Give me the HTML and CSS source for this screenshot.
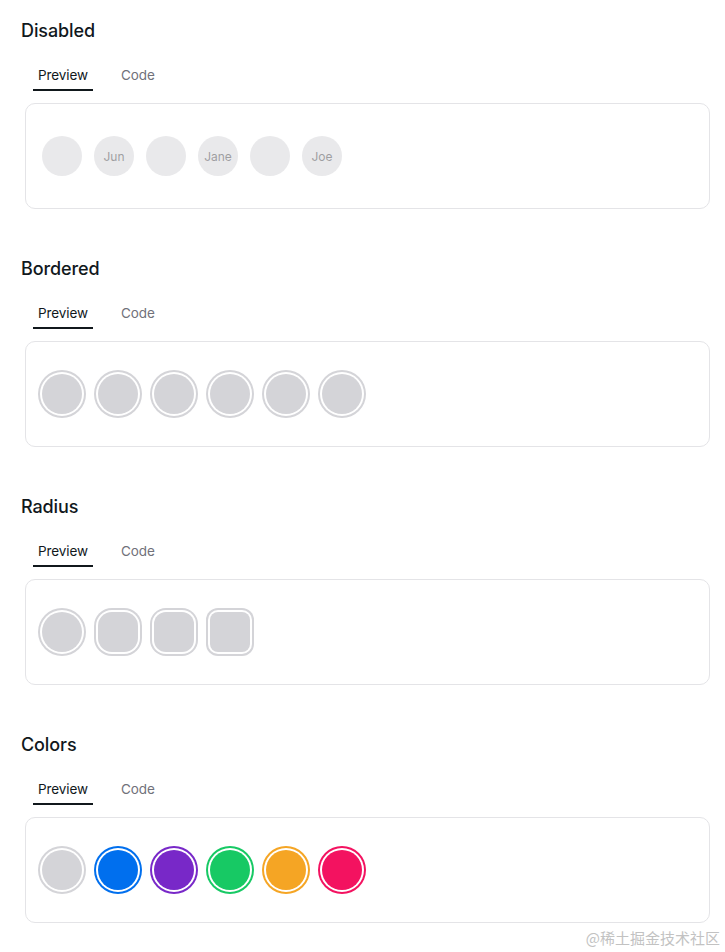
FILE: index.html
```html
<!DOCTYPE html>
<html lang="en">
<head>
<meta charset="utf-8">
<title>Avatar</title>
<link rel="stylesheet" href="styles.css">
</head>
<body>
<main class="page">
  <section class="section">
    <h2 class="title">Disabled</h2>
    <div class="tabs"><span class="tab active">Preview</span><span class="tab">Code</span></div>
    <div class="box">
      <div class="row row-disabled">
        <span class="avatar disabled"></span>
        <span class="avatar disabled">Jun</span>
        <span class="avatar disabled"></span>
        <span class="avatar disabled">Jane</span>
        <span class="avatar disabled"></span>
        <span class="avatar disabled">Joe</span>
      </div>
    </div>
  </section>

  <section class="section">
    <h2 class="title">Bordered</h2>
    <div class="tabs"><span class="tab active">Preview</span><span class="tab">Code</span></div>
    <div class="box">
      <div class="row">
        <span class="avatar ring c-default"></span>
        <span class="avatar ring c-default"></span>
        <span class="avatar ring c-default"></span>
        <span class="avatar ring c-default"></span>
        <span class="avatar ring c-default"></span>
        <span class="avatar ring c-default"></span>
      </div>
    </div>
  </section>

  <section class="section">
    <h2 class="title">Radius</h2>
    <div class="tabs"><span class="tab active">Preview</span><span class="tab">Code</span></div>
    <div class="box">
      <div class="row">
        <span class="avatar ring c-default"></span>
        <span class="avatar ring c-default r-lg"></span>
        <span class="avatar ring c-default r-md"></span>
        <span class="avatar ring c-default r-sm"></span>
      </div>
    </div>
  </section>

  <section class="section">
    <h2 class="title">Colors</h2>
    <div class="tabs"><span class="tab active">Preview</span><span class="tab">Code</span></div>
    <div class="box">
      <div class="row">
        <span class="avatar ring c-default"></span>
        <span class="avatar ring c-primary"></span>
        <span class="avatar ring c-secondary"></span>
        <span class="avatar ring c-success"></span>
        <span class="avatar ring c-warning"></span>
        <span class="avatar ring c-danger"></span>
      </div>
    </div>
  </section>
</main>
<div class="watermark">@稀土掘金技术社区</div>
</body>
</html>
```

FILE: styles.css
```css
* { box-sizing: border-box; }

html, body {
  margin: 0;
  padding: 0;
  background: #ffffff;
}

body {
  font-family: Inter, "Noto Sans", "Liberation Sans", sans-serif;
  color: #11181c;
  width: 725px;
  height: 952px;
  overflow: hidden;
  position: relative;
}

.page {
  padding: 17px 15px 0 21px;
}

.section {
  margin-bottom: 46px;
}

.title {
  margin: 0;
  font-size: 18px;
  line-height: 28px;
  font-weight: 500;
  color: #11181c;
  letter-spacing: -0.1px;
}

.tabs {
  display: flex;
  gap: 23px;
  margin: 14px 0 12px 12px;
  height: 32px;
}

.tab {
  display: flex;
  align-items: center;
  justify-content: center;
  height: 32px;
  padding: 1px 5px 0;
  font-size: 13.5px;
  letter-spacing: -0.1px;
  color: #71717a;
  border-bottom: 2px solid transparent;
}

.tab.active {
  width: 60px;
  padding: 1px 0 0;
  color: #11181c;
  border-bottom-color: #11181c;
}

.box {
  margin-left: 4px;
  height: 106px;
  border: 1px solid #e4e4e7;
  border-radius: 10px;
  padding: 0 16px;
  display: flex;
  align-items: center;
}

.row {
  display: flex;
  gap: 16px;
  align-items: center;
}

.row-disabled {
  gap: 12px;
}

.avatar {
  width: 40px;
  height: 40px;
  border-radius: 50%;
  background: #d4d4d8;
  display: flex;
  align-items: center;
  justify-content: center;
  font-size: 12px;
  color: #3f3f46;
}

.avatar.disabled {
  opacity: 0.5;
}

.avatar.ring {
  box-shadow: 0 0 0 2px #ffffff, 0 0 0 4px var(--ring);
}

.r-lg { border-radius: 14px; }
.r-md { border-radius: 12px; }
.r-sm { border-radius: 8px; }

.c-default { background: #d4d4d8; --ring: #d4d4d8; }
.c-primary { background: #006fee; --ring: #006fee; }
.c-secondary { background: #7828c8; --ring: #7828c8; }
.c-success { background: #17c964; --ring: #17c964; }
.c-warning { background: #f5a524; --ring: #f5a524; }
.c-danger { background: #f31260; --ring: #f31260; }

.watermark {
  position: absolute;
  right: 5px;
  bottom: 4px;
  font-family: "Noto Sans CJK SC", "Liberation Serif", serif;
  font-size: 15px;
  line-height: 20px;
  color: #c2c2c2;
}
```
